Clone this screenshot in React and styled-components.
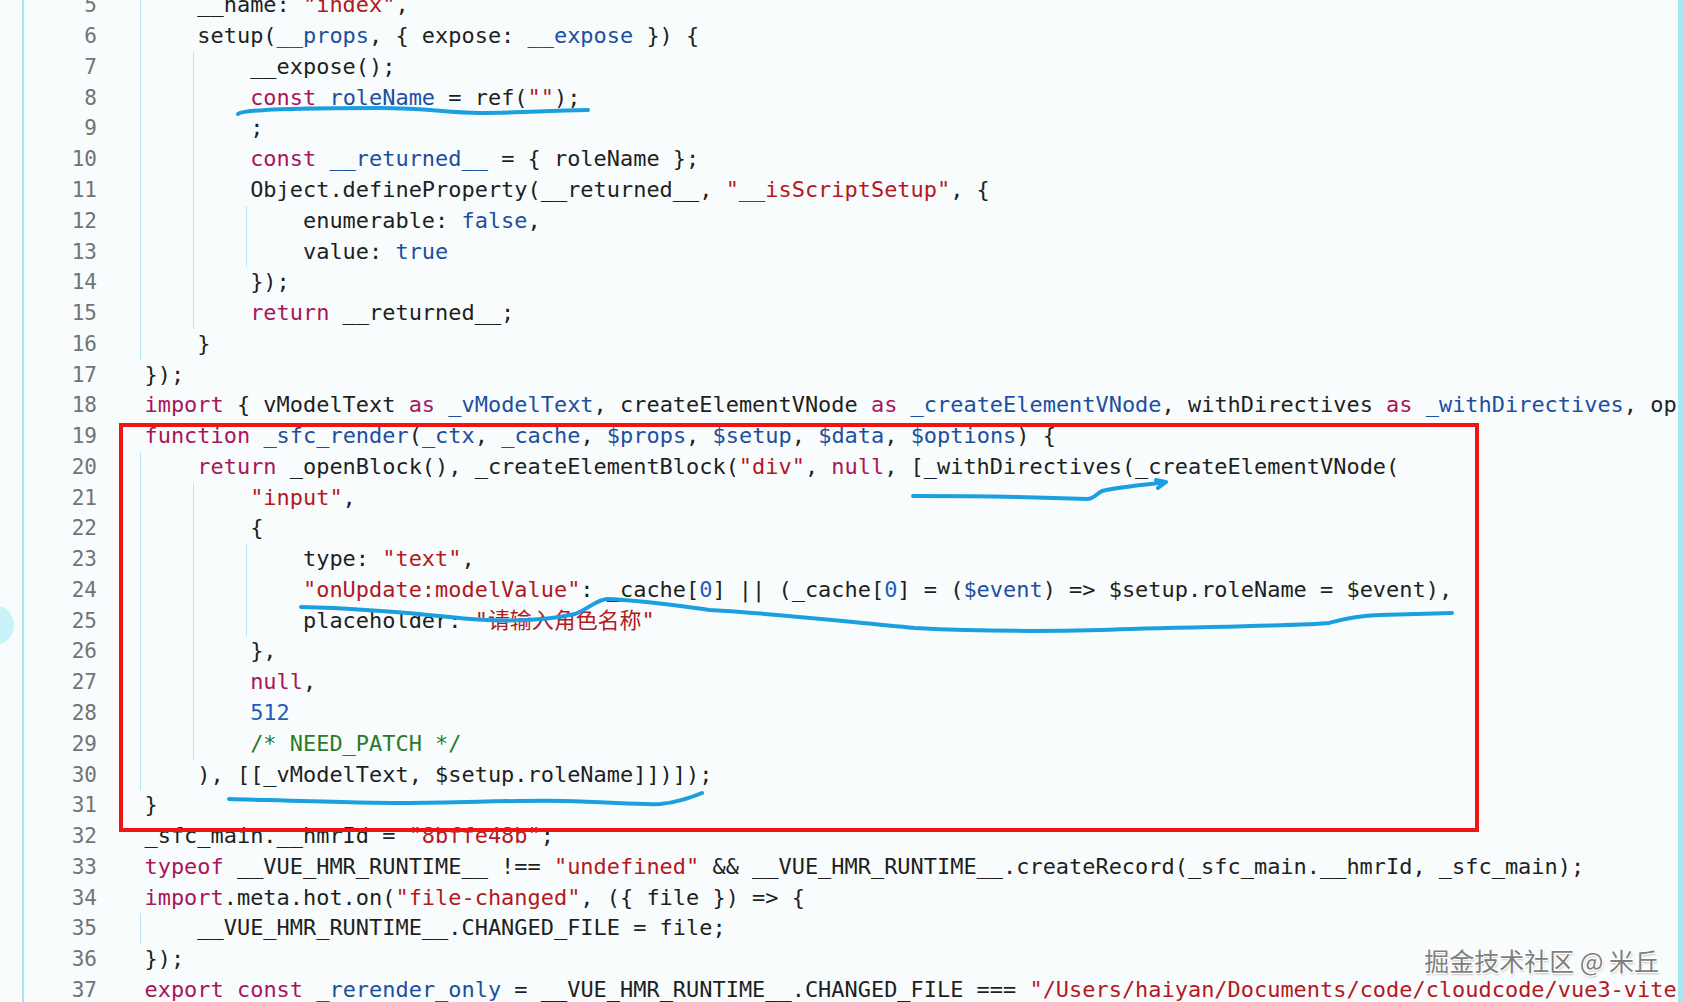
import React from "react";
import styled, { createGlobalStyle } from "styled-components";

const LINE_H = 30.78;

const colors = {
  bg: "#f8fcfd",
  text: "#1f1f1f",
  gutter: "#707476",
  keyword: "#a8155c",
  ident: "#1d4f9e",
  number: "#1f5bbf",
  string: "#b3191e",
  comment: "#2a7a2a",
  rail: "#a8e6f3",
  guide: "#b6e7f4",
};

const GlobalStyle = createGlobalStyle`
  html, body {
    margin: 0;
    padding: 0;
    background: ${colors.bg};
  }
`;

const lines = [
  { n: 5, i: 1, t: [["p", "__name: "], ["s", '"index"'], ["p", ","]] },
  { n: 6, i: 1, t: [["p", "setup("], ["v", "__props"], ["p", ", { expose: "], ["v", "__expose"], ["p", " }) {"]] },
  { n: 7, i: 2, t: [["p", "__expose();"]] },
  { n: 8, i: 2, t: [["k", "const"], ["p", " "], ["v", "roleName"], ["p", " = ref("], ["s", '""'], ["p", ");"]] },
  { n: 9, i: 2, t: [["p", ";"]] },
  { n: 10, i: 2, t: [["k", "const"], ["p", " "], ["v", "__returned__"], ["p", " = { roleName };"]] },
  { n: 11, i: 2, t: [["p", "Object.defineProperty(__returned__, "], ["s", '"__isScriptSetup"'], ["p", ", {"]] },
  { n: 12, i: 3, t: [["p", "enumerable: "], ["v", "false"], ["p", ","]] },
  { n: 13, i: 3, t: [["p", "value: "], ["v", "true"]] },
  { n: 14, i: 2, t: [["p", "});"]] },
  { n: 15, i: 2, t: [["k", "return"], ["p", " __returned__;"]] },
  { n: 16, i: 1, t: [["p", "}"]] },
  { n: 17, i: 0, t: [["p", "});"]] },
  {
    n: 18,
    i: 0,
    t: [
      ["k", "import"], ["p", " { vModelText "], ["k", "as"], ["p", " "], ["v", "_vModelText"],
      ["p", ", createElementVNode "], ["k", "as"], ["p", " "], ["v", "_createElementVNode"],
      ["p", ", withDirectives "], ["k", "as"], ["p", " "], ["v", "_withDirectives"],
      ["p", ", openBlock "], ["k", "as"], ["p", " "], ["v", "_openBlock"], ["p", " }"],
    ],
  },
  {
    n: 19,
    i: 0,
    t: [
      ["k", "function"], ["p", " "], ["v", "_sfc_render"], ["p", "("], ["v", "_ctx"], ["p", ", "],
      ["v", "_cache"], ["p", ", "], ["v", "$props"], ["p", ", "], ["v", "$setup"], ["p", ", "],
      ["v", "$data"], ["p", ", "], ["v", "$options"], ["p", ") {"],
    ],
  },
  {
    n: 20,
    i: 1,
    t: [
      ["k", "return"], ["p", " _openBlock(), _createElementBlock("], ["s", '"div"'], ["p", ", "],
      ["k", "null"], ["p", ", [_withDirectives(_createElementVNode("],
    ],
  },
  { n: 21, i: 2, t: [["s", '"input"'], ["p", ","]] },
  { n: 22, i: 2, t: [["p", "{"]] },
  { n: 23, i: 3, t: [["p", "type: "], ["s", '"text"'], ["p", ","]] },
  {
    n: 24,
    i: 3,
    t: [
      ["s", '"onUpdate:modelValue"'], ["p", ": _cache["], ["n", "0"], ["p", "] || (_cache["], ["n", "0"],
      ["p", "] = ("], ["v", "$event"], ["p", ") => $setup.roleName = $event),"],
    ],
  },
  { n: 25, i: 3, t: [["p", "placeholder: "], ["s", '"请输入角色名称"']] },
  { n: 26, i: 2, t: [["p", "},"]] },
  { n: 27, i: 2, t: [["k", "null"], ["p", ","]] },
  { n: 28, i: 2, t: [["n", "512"]] },
  { n: 29, i: 2, t: [["c", "/* NEED_PATCH */"]] },
  { n: 30, i: 1, t: [["p", "), [[_vModelText, $setup.roleName]])]);"]] },
  { n: 31, i: 0, t: [["p", "}"]] },
  { n: 32, i: 0, t: [["p", "_sfc_main.__hmrId = "], ["s", '"8bffe48b"'], ["p", ";"]] },
  {
    n: 33,
    i: 0,
    t: [
      ["k", "typeof"], ["p", " __VUE_HMR_RUNTIME__ !== "], ["s", '"undefined"'],
      ["p", " && __VUE_HMR_RUNTIME__.createRecord(_sfc_main.__hmrId, _sfc_main);"],
    ],
  },
  { n: 34, i: 0, t: [["k", "import"], ["p", ".meta.hot.on("], ["s", '"file-changed"'], ["p", ", ({ file }) => {"]] },
  { n: 35, i: 1, t: [["p", "__VUE_HMR_RUNTIME__.CHANGED_FILE = file;"]] },
  { n: 36, i: 0, t: [["p", "});"]] },
  {
    n: 37,
    i: 0,
    t: [
      ["k", "export"], ["p", " "], ["k", "const"], ["p", " "], ["v", "_rerender_only"],
      ["p", " = __VUE_HMR_RUNTIME__.CHANGED_FILE === "],
      ["s", '"/Users/haiyan/Documents/code/cloudcode/vue3-vite-demo/src/views/index.vue"'], ["p", ";"],
    ],
  },
];

const tokenColor = {
  p: colors.text,
  k: colors.keyword,
  v: colors.ident,
  n: colors.number,
  s: colors.string,
  c: colors.comment,
};

export default function App() {
  return (
    <>
      <GlobalStyle />
      <Screen>
        <LeftRail />
        <Editor>
          <Lines>
            {lines.map((line) => (
              <Line key={line.n}>
                <LineNo>{line.n}</LineNo>
                <Code>
                  {Array.from({ length: line.i }).map((_, k) => (
                    <Guide key={k} />
                  ))}
                  {line.t.map(([type, text], k) => (
                    <Token key={k} $type={type}>
                      {text}
                    </Token>
                  ))}
                </Code>
              </Line>
            ))}
          </Lines>
        </Editor>
        <RightRail />

        <Bubble />
        <Annotations width="1684" height="1002" viewBox="0 0 1684 1002">
          <rect x="121" y="425" width="1356" height="405" fill="none" stroke="#f01414" strokeWidth="4" />
          <g fill="none" stroke="#1c9fe0" strokeWidth="4" strokeLinecap="round" strokeLinejoin="round">
            <path d="M238 114 C 244 109, 300 108, 380 108 C 430 108, 445 113, 480 113 C 520 113, 540 111, 588 110" />
            <path d="M913 496 C 960 496, 1040 497, 1087 499 C 1094 499, 1096 494, 1102 491 C 1120 487, 1145 485, 1166 482 L 1156 480 M1166 482 L 1158 488" />
            <path d="M301 607 C 350 608, 400 612, 450 617 C 490 622, 540 622, 575 614 C 590 608, 596 600, 607 599 C 640 600, 680 606, 710 610 C 780 614, 830 620, 915 628 C 990 632, 1060 631, 1100 630 C 1182 627, 1300 626, 1329 623 C 1340 620, 1352 616, 1380 615 L 1452 613" />
            <path d="M229 799 C 300 801, 360 803, 402 803 C 480 802, 530 800, 563 801 C 610 802, 640 805, 660 804 C 672 803, 678 801, 685 799 C 692 797, 697 795, 702 793" />
          </g>
        </Annotations>
        <Watermark>掘金技术社区 @ 米丘</Watermark>
      </Screen>
    </>
  );
}

// Styles
const Screen = styled.div`
  position: relative;
  display: flex;
  width: 100vw;
  height: 100vh;
  overflow: hidden;
  background: ${colors.bg};
`;

const LeftRail = styled.div`
  flex: none;
  width: 22px;
  border-right: 2px solid ${colors.rail};
`;

const Editor = styled.div`
  flex: 1;
  min-width: 0;
  overflow: hidden;
`;

const Lines = styled.div`
  display: flex;
  flex-direction: column;
  margin-top: -9.6px;
`;

const Line = styled.div`
  display: flex;
  height: ${LINE_H}px;
  line-height: ${LINE_H}px;
  white-space: pre;
`;

const LineNo = styled.div`
  flex: none;
  width: 73px;
  text-align: right;
  font-family: "DejaVu Sans Mono", monospace;
  font-size: 21px;
  color: ${colors.gutter};
`;

const Code = styled.div`
  flex: none;
  display: flex;
  padding-left: 47.5px;
  font-family: "DejaVu Sans Mono", "Noto Sans CJK SC", monospace;
  font-size: 21.95px;
`;

const Guide = styled.span`
  flex: none;
  box-sizing: border-box;
  width: calc(4ch + 4.5px);
  margin-left: -4.5px;
  border-left: 1.5px solid ${colors.guide};
`;

const Token = styled.span`
  color: ${(props) => tokenColor[props.$type]};
`;

const RightRail = styled.div`
  flex: none;
  width: 6px;
  background: ${colors.rail};
`;

const Bubble = styled.div`
  position: absolute;
  left: -26px;
  top: 605px;
  width: 40px;
  height: 40px;
  border-radius: 50%;
  background: #c9f2f9;
`;

const Annotations = styled.svg`
  position: absolute;
  left: 0;
  top: 0;
  pointer-events: none;
`;

const Watermark = styled.div`
  position: absolute;
  right: 25px;
  top: 948px;
  font-family: "Noto Sans CJK SC", sans-serif;
  font-size: 25px;
  line-height: 1;
  color: #7e7e7e;
  text-shadow: 1px 1px 0 #ffffff, -1px -1px 0 #ffffff, 1px -1px 0 #ffffff, -1px 1px 0 #ffffff,
    1px 2px 2px rgba(0, 0, 0, 0.25);
`;
